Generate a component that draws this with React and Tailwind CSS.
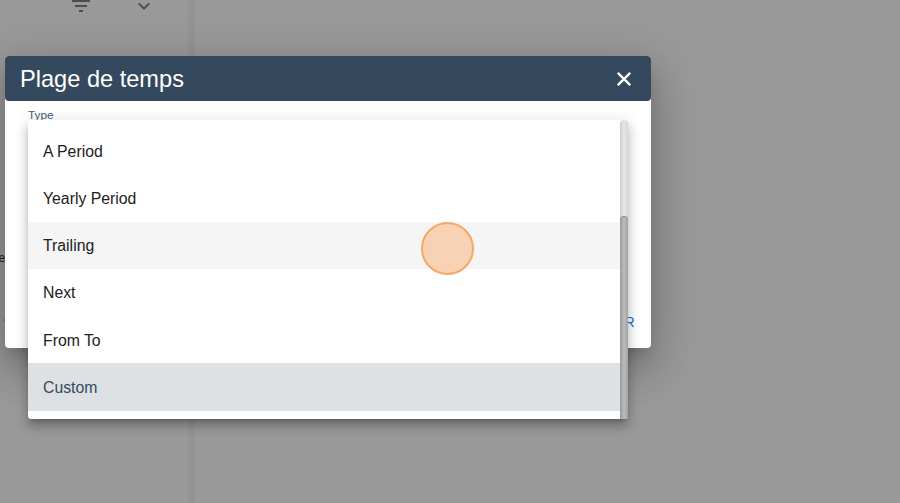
import React, { useState } from "react";

const OPTIONS = [
  "A Period",
  "Yearly Period",
  "Trailing",
  "Next",
  "From To",
  "Custom",
];

function Backdrop() {
  return (
    <div className="flex h-full w-full">
      <div className="w-[188px] shrink-0 flex items-start overflow-hidden">
        <svg
          className="ml-[72px] -mt-[3px] w-[18px] h-[18px] shrink-0"
          viewBox="0 0 18 18"
          fill="#4c4c4c"
        >
          <rect x="0" y="3" width="18" height="2" />
          <rect x="3" y="8" width="12" height="2" />
          <rect x="7" y="13" width="4" height="2" />
        </svg>
        <svg
          className="ml-[48px] mt-[2px] w-3 h-2 shrink-0"
          viewBox="0 0 12 8"
          fill="none"
          stroke="#4c4c4c"
          strokeWidth="1.9"
        >
          <path d="M0.8 1.4 L6 6.6 L11.2 1.4" />
        </svg>
      </div>
      <div className="w-[7px] shrink-0 bg-[#949494]" />
      <div className="flex-1" />
    </div>
  );
}

function TypeMenu({ hovered, selected, onHover, onSelect }) {
  return (
    <div className="absolute left-[27.5px] top-[120px] w-[600px] h-[298.5px] flex rounded-[3px] bg-white shadow-[0_5px_5px_-3px_rgba(0,0,0,0.2),0_8px_10px_1px_rgba(0,0,0,0.14),0_3px_14px_2px_rgba(0,0,0,0.12)]">
      <ul className="flex-1 pt-2">
        {OPTIONS.map((option) => {
          let bg = "";
          if (option === selected) bg = "bg-[#dde1e4] text-[#34495e]";
          else if (option === hovered) bg = "bg-[#f5f5f5]";

          return (
            <li
              key={option}
              className={`h-[47.1px] flex items-center pl-[15.5px] pt-px text-[15.8px] cursor-pointer ${bg}`}
              onMouseEnter={() => onHover(option)}
              onClick={() => onSelect(option)}
            >
              {option}
            </li>
          );
        })}
      </ul>
      {/* scrollbar */}
      <div className="w-2 h-full flex flex-col rounded-t-full bg-linear-to-r from-[#d0d0d0] via-[#e6e6e6] to-[#d6d6d6]">
        <div className="h-24 shrink-0" />
        <div className="flex-1 rounded-t-full rounded-b-[3px] bg-linear-to-r from-[#999] via-[#bcbcbc] to-[#a3a3a3] border-t border-[#8b8b8b]" />
      </div>
    </div>
  );
}

export default function App() {
  const [hovered, setHovered] = useState("Trailing");
  const [selected, setSelected] = useState("Custom");

  return (
    <div className="relative w-[900px] h-[503px] overflow-hidden bg-[#999] text-[#212121] font-['Liberation_Sans',Arial,sans-serif]">
      <Backdrop />
      <span className="absolute left-0 -ml-[1.5px] top-[250px] text-[12px] leading-4 text-[#222]">
        e
      </span>
      <span className="absolute left-[3px] top-[319px] w-[2px] h-[2px] bg-[#a77e48]" />

      {/* dialog */}
      <div className="absolute left-[4.5px] top-[55.5px] w-[646px] h-[292.5px] flex flex-col rounded-[4px] bg-white shadow-[0_11px_15px_-7px_rgba(0,0,0,0.2),0_24px_38px_3px_rgba(0,0,0,0.14),0_9px_46px_8px_rgba(0,0,0,0.12)]">
        <div className="h-[45px] shrink-0 flex items-center justify-between pl-[15.5px] pr-5 rounded-[4px] bg-[#34495e] text-white">
          <h2 className="pt-[3px] text-[23.6px] leading-none">Plage de temps</h2>
          <svg
            className="w-[14px] h-[14px] mt-px"
            viewBox="0 0 14 14"
            fill="none"
            stroke="currentColor"
            strokeWidth="2.3"
          >
            <path d="M0.8 0.8 L13.2 13.2 M13.2 0.8 L0.8 13.2" />
          </svg>
        </div>
        <div className="flex-1 flex flex-col justify-between pl-[23.5px] pr-4 pt-[6px] pb-[18px]">
          <label className="text-[11.8px] leading-4 text-[#4b5d70]">Type</label>
          <button className="self-end text-[14px] leading-4 text-[#1976d2]">
            R
          </button>
        </div>
      </div>

      <TypeMenu
        hovered={hovered}
        selected={selected}
        onHover={setHovered}
        onSelect={setSelected}
      />

      {/* click marker */}
      <div className="absolute left-[421px] top-[222px] w-[53px] h-[53px] rounded-full border-2 border-[#f4a868] bg-[#f7d2b4] pointer-events-none" />
    </div>
  );
}
